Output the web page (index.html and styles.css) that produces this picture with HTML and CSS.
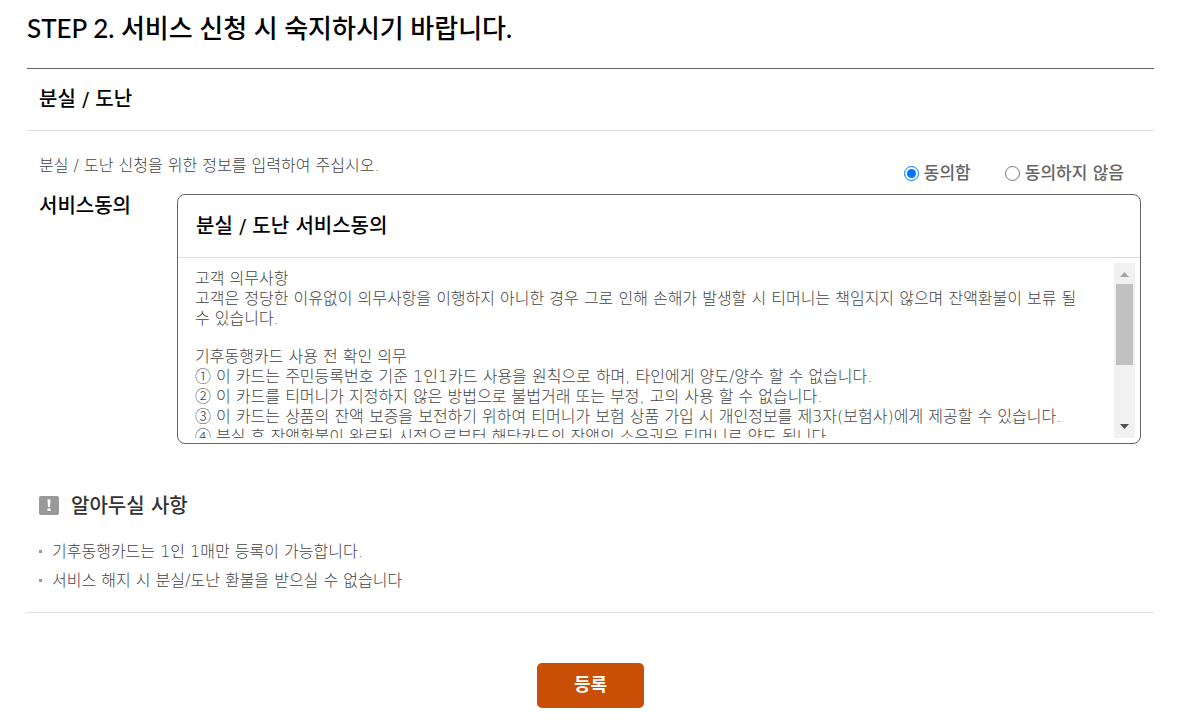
FILE: index.html
```html
<!DOCTYPE html>
<html lang="ko">
<head>
<meta charset="utf-8">
<meta name="viewport" content="width=device-width, initial-scale=1">
<title>분실 / 도난 서비스 신청</title>
<link rel="stylesheet" href="styles.css">
</head>
<body>
<main class="page">
  <h1 class="step-title">STEP 2. 서비스 신청 시 숙지하시기 바랍니다.</h1>
  <form class="panel">
    <h2 class="panel-title">분실 / 도난</h2>
    <div class="panel-body">
      <div class="intro">
        <p class="intro-text">분실 / 도난 신청을 위한 정보를 입력하여 주십시오.</p>
        <div class="choices">
          <label class="choice"><input type="radio" name="agree" value="y" checked>동의함</label>
          <label class="choice"><input type="radio" name="agree" value="n">동의하지 않음</label>
        </div>
      </div>
      <div class="agreement">
        <h3 class="agreement-label">서비스동의</h3>
        <section class="terms">
          <h4 class="terms-title">분실 / 도난 서비스동의</h4>
          <div class="terms-view">
            <div class="terms-text">
              <p>고객 의무사항<br>고객은 정당한 이유없이 의무사항을 이행하지 아니한 경우 그로 인해 손해가 발생할 시 티머니는 책임지지 않으며 잔액환불이 보류 될 수 있습니다.</p>
              <p>기후동행카드 사용 전 확인 의무<br>① 이 카드는 주민등록번호 기준 1인1카드 사용을 원칙으로 하며, 타인에게 양도/양수 할 수 없습니다.<br>② 이 카드를 티머니가 지정하지 않은 방법으로 불법거래 또는 부정, 고의 사용 할 수 없습니다.<br>③ 이 카드는 상품의 잔액 보증을 보전하기 위하여 티머니가 보험 상품 가입 시 개인정보를 제3자(보험사)에게 제공할 수 있습니다.<br>④ 분실 후 잔액환불이 완료된 시점으로부터 해당카드의 잔액의 소유권은 티머니로 양도 됩니다.</p>
            </div>
            <div class="scrollbar" aria-hidden="true">
              <svg class="arrow" viewBox="0 0 21 21"><path d="M6 14h9l-4.500-5z" fill="#a3a3a3"/></svg>
              <span class="thumb"></span>
              <svg class="arrow arrow-down" viewBox="0 0 21 21"><path d="M6 7h9l-4.500 5z" fill="#505050"/></svg>
            </div>
          </div>
        </section>
      </div>
      <section class="notes">
        <h3 class="notes-title"><svg class="notes-icon" viewBox="0 0 20 20" aria-hidden="true"><rect width="20" height="19" rx="2" fill="#999"/><path d="M8.500 3.500h3l-.5 7.500h-2zM8.500 12.500h3v2.500h-3z" fill="#fff"/></svg>알아두실 사항</h3>
        <ul class="notes-list">
          <li>기후동행카드는 1인 1매만 등록이 가능합니다.</li>
          <li>서비스 해지 시 분실/도난 환불을 받으실 수 없습니다</li>
        </ul>
      </section>
    </div>
    <div class="actions"><button type="button" class="submit">등록</button></div>
  </form>
</main>
</body>
</html>
```
FILE: styles.css
```css
* { box-sizing: border-box; }
body, h1, h2, h3, h4, p, ul { margin: 0; padding: 0; }
body { background: #fff; color: #444; font: 300 16px/20px "DejaVu Sans", "Noto Sans CJK KR", sans-serif; }
.page { padding: 8px 27px 16px; }
.step-title { color: #000; font-family: Lato, "Noto Sans CJK KR", sans-serif; font-size: 26px; font-weight: 500; line-height: 40px; padding-bottom: 20px; }
.panel { border-top: 1px solid #666; }
.panel-title { color: #000; font-size: 20px; font-weight: 500; line-height: 61px; padding: 0 12px; border-bottom: 1px solid #ddd; }
.panel-body { padding: 24px 12px 17px; border-bottom: 1px solid #ddd; }
.intro { display: flex; justify-content: space-between; }
.intro-text { line-height: 22px; }
.choices { display: flex; gap: 34px; padding: 7px 18px 0 0; height: 39px; }
.choice { display: flex; align-items: center; gap: 5px; height: 22px; font-size: 17px; font-weight: 500; color: #666; }
.choice input { width: 15px; height: 15px; margin: 0; }
.agreement { display: flex; align-items: flex-start; }
.agreement-label { flex: 0 0 138px; color: #000; font-size: 20px; font-weight: 500; line-height: 24px; }
.terms { flex: 1; min-width: 0; margin-right: 1px; border: 1px solid #666; border-radius: 8px; }
.terms-title { color: #000; font-size: 20px; font-weight: 500; line-height: 62px; padding: 0 18px; border-bottom: 1px solid #ddd; }
.terms-view { display: flex; height: 185px; padding: 5px 5px 5px 0; }
.terms-text { flex: 1; min-width: 0; overflow: hidden; padding: 6px 24px 0 17px; }
.terms-text p + p { margin-top: 18px; }
.scrollbar { display: flex; flex-direction: column; width: 21px; background: #f1f1f1; }
.arrow { width: 21px; height: 21px; }
.arrow-down { margin-top: auto; }
.thumb { height: 81px; margin: 0 2px; background: #c1c1c1; }
.notes { padding-top: 50px; }
.notes-title { display: flex; align-items: center; gap: 12px; color: #333; font-size: 20px; font-weight: 500; line-height: 24px; }
.notes-icon { width: 20px; height: 20px; }
.notes-list { list-style: none; padding-top: 19px; }
.notes-list li { display: flex; align-items: center; gap: 10px; line-height: 29px; }
.notes-list li::before { content: ""; width: 3px; height: 3px; background: #999; }
.actions { display: flex; justify-content: center; padding-top: 50px; }
.submit { width: 107px; height: 45px; padding: 0 0 2px; border: 0; border-radius: 5px; background: #c94f06; color: #fff; font: 700 18px/24px "DejaVu Sans", "Noto Sans CJK KR", sans-serif; }
```
